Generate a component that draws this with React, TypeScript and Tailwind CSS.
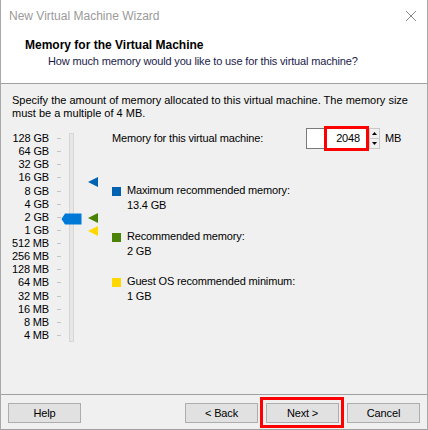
import React from "react";

const labels = [
  "128 GB", "64 GB", "32 GB", "16 GB", "8 GB", "4 GB", "2 GB", "1 GB",
  "512 MB", "256 MB", "128 MB", "64 MB", "32 MB", "16 MB", "8 MB", "4 MB",
];

function Btn({ children, className = "" }: { children: React.ReactNode; className?: string }) {
  return (
    <div
      className={`w-[73px] h-[20px] bg-[#e1e1e1] border border-[#adadad] flex items-center justify-center text-[11px] tracking-[-0.15px] text-black ${className}`}
    >
      {children}
    </div>
  );
}

export default function App() {
  return (
    <div
      className="w-[428px] h-[430px] flex flex-col border-x border-[#a8a8a8] bg-[#f0f0f0] overflow-hidden"
      style={{ fontFamily: '"Liberation Sans", Arial, sans-serif' }}
    >
      {/* title bar */}
      <div className="h-[31px] bg-white flex items-center justify-between pl-[8px] pr-[10px]">
        <span className="text-[12px] text-[#9a9a9a]">New Virtual Machine Wizard</span>
        <svg width="12" height="12" viewBox="0 0 12 12">
          <path d="M1 1 L11 11 M11 1 L1 11" stroke="#888" strokeWidth="1" />
        </svg>
      </div>
      {/* header */}
      <div className="h-[53px] bg-white border-b border-[#a0a0a0] flex flex-col pt-[7px]">
        <div className="pl-[24px] text-[12px] font-bold text-black leading-[15px]">Memory for the Virtual Machine</div>
        <div className="pl-[47px] text-[11px] tracking-[-0.15px] text-[#1a1a4a] leading-[15px] mt-[1px]">
          How much memory would you like to use for this virtual machine?
        </div>
      </div>
      {/* body */}
      <div className="flex-1 flex flex-col text-[11px] tracking-[-0.15px]">
        <div className="pl-[11px] pr-[4px] pt-[10px] leading-[13px] text-black tracking-[0px] whitespace-nowrap">
          Specify the amount of memory allocated to this virtual machine. The memory size
          <br />
          must be a multiple of 4 MB.
        </div>
        <div className="flex mt-[12px]">
          {/* slider */}
          <div className="relative w-[111px] h-[212px]">
            <div className="absolute left-0 top-0 w-[48px] h-[210px] flex flex-col justify-between">
              {labels.map((l) => (
                <div key={l} className="h-[13px] leading-[13px] text-black text-right whitespace-nowrap">
                  {l}
                </div>
              ))}
            </div>
            <div className="absolute left-[56px] top-0 w-[5px] h-[210px] flex flex-col justify-between">
              {labels.map((l) => (
                <div key={l} className="h-[13px] flex items-center">
                  <div className="w-[4px] h-[1px] bg-[#c4c4c4]" />
                </div>
              ))}
            </div>
            <div className="absolute left-[68px] top-[1px] w-[5px] h-[209px] border border-[#d6d6d6] bg-[#e7e7e7]" />
            {/* thumb */}
            <svg className="absolute left-[60px] top-[81px]" width="21" height="12" viewBox="0 0 21 12">
              <path d="M0.5 6 L4 0.5 L20.5 0.5 L20.5 11.5 L4 11.5 Z" fill="#0078d7" />
            </svg>
            {/* arrows */}
            <svg className="absolute left-[87px] top-[45px]" width="10" height="10" viewBox="0 0 10 10">
              <path d="M0 5 L10 0 L10 10 Z" fill="#0063b1" />
            </svg>
            <svg className="absolute left-[87px] top-[81px]" width="10" height="10" viewBox="0 0 10 10">
              <path d="M0 5 L10 0 L10 10 Z" fill="#498205" />
            </svg>
            <svg className="absolute left-[87px] top-[94px]" width="10" height="10" viewBox="0 0 10 10">
              <path d="M0 5 L10 0 L10 10 Z" fill="#ffd800" />
            </svg>
          </div>
          {/* right side */}
          <div className="flex-1 flex flex-col">
            <div className="flex items-center h-[13px]">
              <span className="text-black w-[194px] whitespace-nowrap">Memory for this virtual machine:</span>
              <div className="relative flex items-center">
                <div className="w-[63px] h-[21px] bg-white border border-[#7a7a7a] flex items-center justify-end pr-[8px] text-black">
                  2048
                </div>
                <div className="absolute left-[18px] top-[-2px] w-[45px] h-[25px] border-[3px] border-[#ff0000]" />
                <div className="w-[11px] h-[21px] flex flex-col border border-[#c8c8c8] bg-[#f0f0f0]">
                  <div className="flex-1 flex items-center justify-center border-b border-[#c8c8c8]">
                    <svg width="5" height="3" viewBox="0 0 5 3"><path d="M0 3 L2.5 0 L5 3 Z" fill="#000" /></svg>
                  </div>
                  <div className="flex-1 flex items-center justify-center">
                    <svg width="5" height="3" viewBox="0 0 5 3"><path d="M0 0 L2.5 3 L5 0 Z" fill="#000" /></svg>
                  </div>
                </div>
                <span className="ml-[5px] text-black">MB</span>
              </div>
            </div>
            <div className="flex flex-col mt-[38px] gap-[15.5px]">
              {[
                { c: "bg-[#0063b1]", t: "Maximum recommended memory:", v: "13.4 GB" },
                { c: "bg-[#498205]", t: "Recommended memory:", v: "2 GB" },
                { c: "bg-[#ffd800]", t: "Guest OS recommended minimum:", v: "1 GB" },
              ].map((r) => (
                <div key={r.t} className="flex">
                  <div className={`w-[9px] h-[9px] mt-[4px] mr-[6px] ${r.c}`} />
                  <div className="flex flex-col leading-[15px] text-black">
                    <span>{r.t}</span>
                    <span>{r.v}</span>
                  </div>
                </div>
              ))}
            </div>
          </div>
        </div>
      </div>
      {/* footer */}
      <div className="h-[36px] border-t border-[#a0a0a0] border-b flex items-start pt-[8px] pl-[7px] relative">
        <Btn>Help</Btn>
        <Btn className="ml-[104px]">&lt; Back</Btn>
        <div className="ml-[8px] relative">
          <Btn>Next &gt;</Btn>
          <div className="absolute -left-[6px] -top-[6px] w-[84px] h-[31px] border-[3px] border-[#ff0000]" />
        </div>
        <Btn className="ml-[8px]">Cancel</Btn>
      </div>
    </div>
  );
}
